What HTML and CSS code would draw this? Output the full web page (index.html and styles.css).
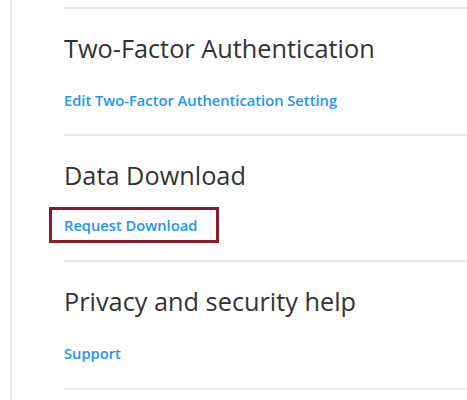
FILE: index.html
```html
<!DOCTYPE html>
<html>
<head>
<meta charset="utf-8">
<link rel="stylesheet" href="styles.css">
</head>
<body>
<div class="page">
  <div class="list">
    <section class="item">
      <h2 class="title">Two-Factor Authentication</h2>
      <a class="link" href="#">Edit Two-Factor Authentication Setting</a>
    </section>
    <section class="item mid">
      <h2 class="title">Data Download</h2>
      <a class="link focused" href="#">Request Download</a>
    </section>
    <section class="item last">
      <h2 class="title">Privacy and security help</h2>
      <a class="link" href="#">Support</a>
    </section>
  </div>
</div>
</body>
</html>
```
FILE: styles.css
```css
html, body {
  margin: 0;
  padding: 0;
  background: #fff;
}
body {
  font-family: "Open Sans", "Noto Sans", sans-serif;
  color: #333;
}
.page {
  margin-left: 10px;
  border-left: 2px solid #e8e8e8;
  min-height: 400px;
  padding-left: 52px;
  padding-top: 7px;
  box-sizing: border-box;
}
.item {
  border-top: 2px solid #e6e6e6;
  height: 127px;
  padding-top: 23px;
  box-sizing: border-box;
}
.item.mid {
  height: 126px;
}
.item.last {
  border-bottom: 2px solid #efefef;
  height: 130px;
}
.title {
  margin: 0;
  font-weight: 400;
  font-size: 25.3px;
  line-height: 32px;
  color: #333;
}
.link {
  display: inline-block;
  margin-top: 26px;
  font-size: 14.7px;
  font-weight: 600;
  line-height: 20px;
  color: #2196f3;
  text-decoration: none;
}
.link.focused {
  margin-top: 16px;
  margin-left: -15px;
  padding: 5px 19px 5px 12px;
  border: 3px solid #8b1a2c;
}
```
